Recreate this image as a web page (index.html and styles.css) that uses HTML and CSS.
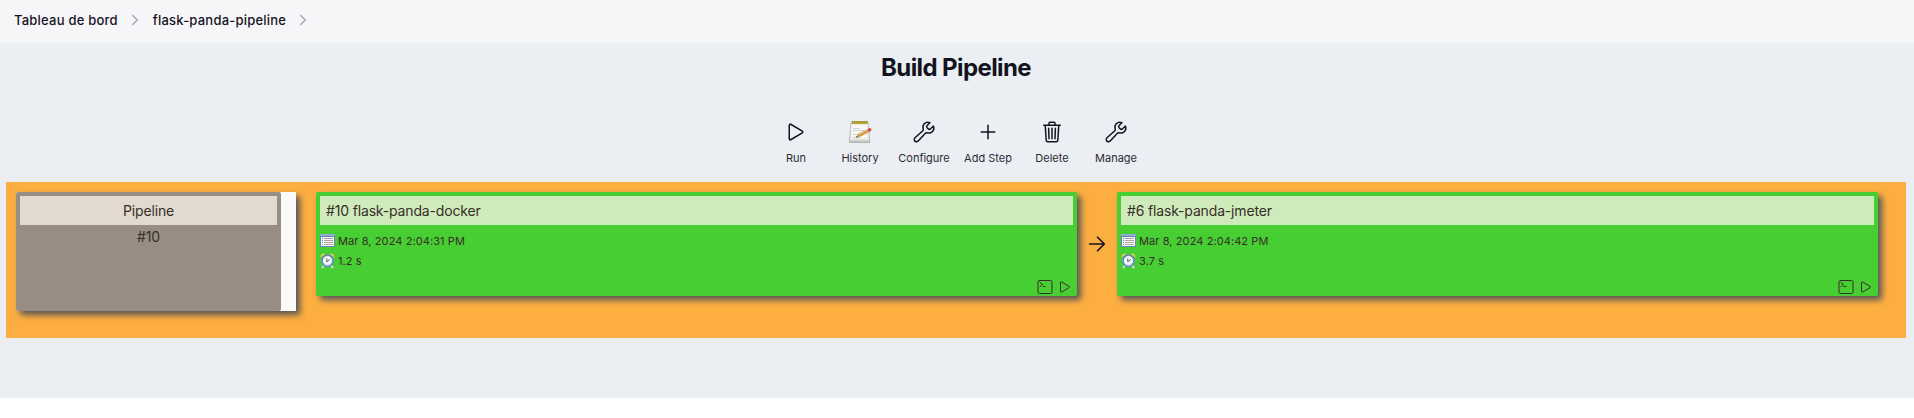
FILE: index.html
```html
<!DOCTYPE html>
<html lang="fr">
<head>
<meta charset="utf-8">
<title>flask-panda-pipeline</title>
<link rel="stylesheet" href="styles.css">
</head>
<body>
<svg class="defs" width="0" height="0">
  <symbol id="chevron" viewBox="0 0 512 512"><path class="line thick" d="M184 112l144 144-144 144"/></symbol>
  <symbol id="play" viewBox="0 0 512 512"><path class="line" d="M112 111v290c0 17.44 17 28.52 31 20.16l247.9-148.37c12.12-7.25 12.12-26.33 0-33.58L143 90.84c-14-8.36-31 2.72-31 20.16z"/></symbol>
  <symbol id="wrench" viewBox="0 0 512 512"><path class="line" d="M393.87 190a32.1 32.1 0 01-45.25 0l-26.57-26.57a32.09 32.09 0 010-45.26L382.19 58a1 1 0 00-.3-1.64c-38.82-16.64-89.15-8.16-121.11 23.57-30.58 30.35-32.32 76-21.12 115.84a31.93 31.93 0 01-9.06 32.08L64 380a48.17 48.17 0 1068 68l153.86-167a31.93 31.93 0 0131.6-9.13c39.54 10.59 84.54 8.6 114.72-21.19 32.49-32 39.5-88.56 23.75-120.93a1 1 0 00-1.6-.26l-61.34 60.58z"/></symbol>
  <symbol id="plus" viewBox="0 0 512 512"><path class="line" d="M256 112v288M400 256H112"/></symbol>
  <symbol id="trash" viewBox="0 0 512 512"><path class="line" d="M112 112l20 320c.95 18.49 14.4 32 32 32h184c17.67 0 30.87-13.51 32-32l20-320M80 112h352M192 112V72h0a23.93 23.93 0 0124-24h80a23.93 23.93 0 0124 24h0v40M256 176v224M184 176l8 224M328 176l-8 224"/></symbol>
  <symbol id="arrow" viewBox="0 0 512 512"><path class="line medium" d="M268 112l144 144-144 144M392 256H100"/></symbol>
  <symbol id="terminal" viewBox="0 0 512 512"><rect class="line" x="32" y="48" width="448" height="416" rx="48"/><path class="line" d="M96 112l80 64-80 64M192 240h64"/></symbol>
  <symbol id="notepad" viewBox="0 0 24 24">
    <path fill="#b4b5b4" d="M2.4 2.5h18.2l1.7 20.5H.9z"/>
    <path fill="#e9e9e8" d="M3 3.5h17.2l.9 17H2z"/>
    <path fill="#f8f8f8" d="M4 5h15l.6 13H3.4z"/>
    <path fill="#cccdcb" d="M2 20.5h19.1l.1 1.2H1.9z"/>
    <path fill="#b9a63a" d="M3.6 1h16.2v3H3.6z"/>
    <path stroke="#857829" stroke-width=".8" stroke-dasharray="1 1" d="M4 1.8h15"/>
    <path stroke="#d0d1d2" d="M5 8.5h7M5 10.5h12M5 14.5h6M5 17.5h7"/>
    <path fill="#cf9336" d="M8 17.4l2.2-3.6 9.3-4.3 1.7 2.6-9.3 4.6z"/>
    <path fill="#f1c879" d="M10.2 14.4l9.5-4.3.5.7-9.6 4.5z"/>
    <path fill="#59452b" d="M7.8 17.7l1.1-1.8 1.2 1z"/>
    <path fill="#a9adb3" d="M18.3 10l1.5-.7 1.5 2.5-1.5.7z"/>
    <path fill="#dc4133" d="M19.6 9l2.3-1.1 1.6 1-.6 2.1-1.9 1z"/>
  </symbol>
  <symbol id="list" viewBox="0 0 16 16">
    <path fill="#6784b8" d="M0 1h15v13H0z"/>
    <path fill="#91add8" d="M0 1h15v2H0z"/>
    <path fill="#fbfaf8" d="M1 4h13v9H1z"/>
    <path stroke="#a79c94" stroke-width=".9" d="M4 5.5h9M4 7.5h9M4 9.5h9M4 11.5h9"/>
    <path stroke="#5791d6" d="M2 5.5h1M2 7.5h1M2 9.5h1M2 11.5h1"/>
  </symbol>
  <symbol id="clock" viewBox="0 0 16 16">
    <path stroke="#d5d6cd" stroke-width="2" stroke-linecap="round" d="M4 12.5L2.5 14.5M11 12.5l1.7 2"/>
    <path fill="#e9bd36" d="M.4 5C0 1.8 2.5 0 5.4.8zM14.6 5c.4-3.2-2.1-5-5-4.2z"/>
    <path fill="#f8e48a" d="M1.5 3C2 1.7 3 1.2 4 1.4zM13.5 3c-.5-1.3-1.5-1.8-2.5-1.6z"/>
    <circle cx="7.5" cy="7.8" r="5.6" fill="#dce9f5" stroke="#5e8dc4" stroke-width="1.7"/>
    <circle cx="7.5" cy="7.6" r="4" fill="#f5f6f5"/>
    <path fill="none" stroke="#555b62" stroke-width="1" d="M6.8 5.5v3.3L9.7 6.5"/>
  </symbol>
</svg>

<header class="breadcrumbs">
  <span>Tableau de bord</span>
  <svg class="chevron"><use href="#chevron"/></svg>
  <span>flask-panda-pipeline</span>
  <svg class="chevron"><use href="#chevron"/></svg>
</header>

<main class="page">
  <h1 class="title">Build Pipeline</h1>
  <nav class="toolbar">
    <a class="tool"><svg class="tool-icon"><use href="#play"/></svg>Run</a>
    <a class="tool"><svg class="tool-icon"><use href="#notepad"/></svg>History</a>
    <a class="tool"><svg class="tool-icon"><use href="#wrench"/></svg>Configure</a>
    <a class="tool"><svg class="tool-icon"><use href="#plus"/></svg>Add Step</a>
    <a class="tool"><svg class="tool-icon"><use href="#trash"/></svg>Delete</a>
    <a class="tool"><svg class="tool-icon"><use href="#wrench"/></svg>Manage</a>
  </nav>

  <section class="pipeline">
    <div class="revision">
      <div class="revision-body">
        <div class="revision-title">Pipeline</div>
        <div class="revision-number">#10</div>
      </div>
    </div>
    <article class="build">
      <div class="build-title">#10 flask-panda-docker</div>
      <div class="meta"><svg class="small-icon"><use href="#list"/></svg>Mar 8, 2024 2:04:31 PM</div>
      <div class="meta"><svg class="small-icon"><use href="#clock"/></svg>1.2 s</div>
      <div class="actions"><svg class="small-icon"><use href="#terminal"/></svg><svg class="small-icon"><use href="#play"/></svg></div>
    </article>
    <div class="next"><svg class="next-icon"><use href="#arrow"/></svg></div>
    <article class="build">
      <div class="build-title">#6 flask-panda-jmeter</div>
      <div class="meta"><svg class="small-icon"><use href="#list"/></svg>Mar 8, 2024 2:04:42 PM</div>
      <div class="meta"><svg class="small-icon"><use href="#clock"/></svg>3.7 s</div>
      <div class="actions"><svg class="small-icon"><use href="#terminal"/></svg><svg class="small-icon"><use href="#play"/></svg></div>
    </article>
  </section>
</main>
</body>
</html>
```

FILE: styles.css
```css
* { box-sizing: border-box; }
body {
  margin: 0;
  background: #fff;
  color: #14141f;
  font-family: Inter, "Liberation Sans", sans-serif;
}
svg { display: block; flex: none; }
.defs { display: none; }
.line {
  fill: none;
  stroke: currentColor;
  stroke-width: 32;
  stroke-linecap: round;
  stroke-linejoin: round;
}
.medium { stroke-width: 36; }
.thick { stroke-width: 48; }

.breadcrumbs {
  display: flex;
  align-items: center;
  height: 43px;
  padding: 0 14px 3px;
  background: #f6f6f8;
  font-size: 13px;
  font-weight: 500;
  letter-spacing: 0.22px;
}
.chevron { width: 16px; height: 16px; margin: 0 10px 0 9px; color: #a5a5b2; }

.page {
  height: 355px;
  padding: 0 8px 0 6px;
  background: #ebeff4;
}
.title {
  margin: 0;
  padding-top: 10px;
  height: 75px;
  font-size: 24px;
  line-height: 30px;
  font-weight: 650;
  letter-spacing: -0.6px;
  text-align: center;
}
.toolbar {
  display: flex;
  justify-content: center;
  height: 64px;
}
.tool {
  display: flex;
  flex-direction: column;
  align-items: center;
  gap: 6px;
  width: 64px;
  padding-top: 2px;
  color: #2b2b34;
  font-size: 11px;
  line-height: 16px;
  white-space: nowrap;
}
.tool-icon { width: 24px; height: 24px; color: #14141f; }

.pipeline {
  display: flex;
  align-items: flex-start;
  height: 156px;
  padding: 10px;
  background: #fdae40;
  color: #382e29;
}
.revision {
  width: 280px;
  height: 119px;
  margin-right: 20px;
  padding-right: 15px;
  background: #fafafa;
  border-radius: 2px 0 0 2px;
  box-shadow: 4px 4px 6px #555;
}
.revision-body {
  height: 100%;
  padding: 4px;
  background: #988d82;
  border-radius: 2px;
  font-size: 14px;
  letter-spacing: -0.15px;
  text-align: center;
}
.revision-title { height: 29px; line-height: 30px; background: #e2d9d0; }
.revision-number { line-height: 23px; }

.build {
  display: flex;
  flex-direction: column;
  width: 761px;
  height: 104px;
  padding: 4px;
  background: #47ce32;
  border-radius: 2px;
  box-shadow: 4px 4px 6px #555;
}
.build > * { flex: none; }
.build-title {
  height: 29px;
  margin-bottom: 6px;
  padding-left: 6px;
  line-height: 30px;
  font-size: 14px;
  letter-spacing: -0.16px;
  background: #cfebbb;
}
.meta {
  display: flex;
  align-items: center;
  gap: 2px;
  height: 20px;
  font-size: 11px;
  letter-spacing: 0.09px;
}
.small-icon { width: 16px; height: 16px; }
.actions {
  display: flex;
  justify-content: flex-end;
  gap: 4px;
  margin-top: 8px;
}
.next { width: 40px; padding-top: 40px; color: #14141f; }
.next-icon { width: 24px; height: 24px; margin: 0 auto; }
```
